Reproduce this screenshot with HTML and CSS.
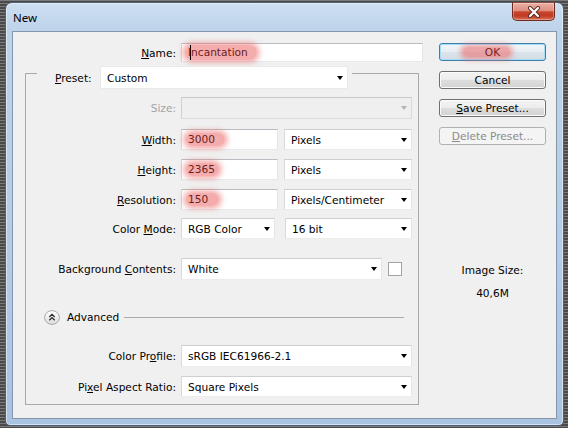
FILE: index.html
```html
<!DOCTYPE html>
<html>
<head>
<meta charset="utf-8">
<title>New</title>
<link rel="stylesheet" href="styles.css">
</head>
<body>
<div class="window">
  <div class="titlebar">
    <span class="title">New</span>
    <div class="close">
      <svg width="16" height="12" viewBox="0 0 16 12">
        <path d="M4 2 L12 10 M12 2 L4 10" stroke="#5a2a22" stroke-width="4" stroke-linecap="round" fill="none"/>
        <path d="M4 2 L12 10 M12 2 L4 10" stroke="#ffffff" stroke-width="2.2" stroke-linecap="round" fill="none"/>
      </svg>
    </div>
  </div>
  <div class="client">
    <div class="main">
      <div class="row name-row">
        <span class="lbl lbl-name"><u>N</u>ame:</span>
        <div class="field name-field"><span class="mark m-name"><span class="caret"></span>Incantation</span></div>
      </div>
      <fieldset class="group">
        <legend class="legend">
          <div class="legend-in">
            <span class="legend-lbl"><u>P</u>reset:</span>
            <div class="select preset-select"><span>Custom</span><i class="arr"></i></div>
          </div>
        </legend>
        <div class="row r-size">
          <span class="lbl dis">Size:</span>
          <div class="select disabled c-full"><span></span><i class="arr"></i></div>
        </div>
        <div class="row r-width">
          <span class="lbl"><u>W</u>idth:</span>
          <div class="field c-num"><span class="mark m-3000">3000</span></div>
          <div class="select c-unit"><span>Pixels</span><i class="arr"></i></div>
        </div>
        <div class="row r-height">
          <span class="lbl"><u>H</u>eight:</span>
          <div class="field c-num"><span class="mark m-2365">2365</span></div>
          <div class="select c-unit"><span>Pixels</span><i class="arr"></i></div>
        </div>
        <div class="row r-res">
          <span class="lbl"><u>R</u>esolution:</span>
          <div class="field c-num"><span class="mark m-150">150</span></div>
          <div class="select c-unit"><span>Pixels/Centimeter</span><i class="arr"></i></div>
        </div>
        <div class="row r-mode">
          <span class="lbl">Color <u>M</u>ode:</span>
          <div class="select c-mode"><span>RGB Color</span><i class="arr"></i></div>
          <div class="select c-bit"><span>16 bit</span><i class="arr"></i></div>
        </div>
        <div class="row r-bg">
          <span class="lbl">Background <u>C</u>ontents:</span>
          <div class="select c-bg"><span>White</span><i class="arr"></i></div>
          <div class="check"></div>
        </div>
        <div class="row r-adv">
          <div class="adv-btn">
            <svg width="16" height="15" viewBox="0 0 16 15">
              <defs>
                <linearGradient id="ag" x1="0" y1="0" x2="0" y2="1">
                  <stop offset="0" stop-color="#ffffff"/>
                  <stop offset="1" stop-color="#dcdcdc"/>
                </linearGradient>
              </defs>
              <ellipse cx="8" cy="7.5" rx="7.4" ry="6.9" fill="url(#ag)" stroke="#a9a9a9" stroke-width="1"/>
              <path d="M5.3 7 L8 4.4 L10.7 7 M5.3 10.2 L8 7.6 L10.7 10.2" stroke="#2a2a2a" stroke-width="1.3" fill="none"/>
            </svg>
          </div>
          <span class="adv-text">Advanced</span>
          <div class="adv-line"></div>
        </div>
        <div class="row r-prof">
          <span class="lbl">Color Pr<u>o</u>file:</span>
          <div class="select c-full"><span>sRGB IEC61966-2.1</span><i class="arr"></i></div>
        </div>
        <div class="row r-asp">
          <span class="lbl">Pi<u>x</u>el Aspect Ratio:</span>
          <div class="select c-full"><span>Square Pixels</span><i class="arr"></i></div>
        </div>
      </fieldset>
    </div>
    <div class="side">
      <div class="btn default"><span class="mark m-ok">OK</span></div>
      <div class="btn">Cancel</div>
      <div class="btn"><span><u>S</u>ave Preset...</span></div>
      <div class="btn disabled-btn"><span><u>D</u>elete Preset...</span></div>
      <div class="imgsize">Image Size:</div>
      <div class="imgval">40,6M</div>
    </div>
  </div>
</div>
</body>
</html>
```

FILE: styles.css
```css
* { box-sizing: border-box; }
html, body { margin: 0; padding: 0; }
body {
  width: 568px;
  height: 428px;
  overflow: hidden;
  background: repeating-linear-gradient(180deg, #7a7a7a 0 1px, #4a4a4a 1px 3px);
  font-family: "DejaVu Sans", sans-serif;
  font-size: 10.6px;
  color: #000;
}
u { text-decoration: underline; text-underline-offset: 1px; }

.window {
  margin: 2px 0 0 5px;
  width: 559px;
  height: 424px;
  border: 1px solid #4e6077;
  border-radius: 7px 7px 5px 5px;
  padding: 0 6px 6px;
  background: linear-gradient(180deg, #cddff1 0, #bdd3ea 28px, #b4cbe5 60%, #a9c3e0 100%);
  box-shadow: inset 0 0 0 1px rgba(255,255,255,0.5);
  display: flex;
  flex-direction: column;
}
.titlebar {
  height: 28px;
  flex: none;
  display: flex;
  align-items: center;
  justify-content: space-between;
}
.title {
  font-family: "Noto Sans", sans-serif;
  font-size: 11.5px;
  padding-left: 1px;
  color: #000;
}
.close {
  align-self: flex-start;
  margin-top: -1px;
  margin-right: 2px;
  width: 43px;
  height: 19px;
  border: 1px solid #6e2a1e;
  border-top-color: #8a4a40;
  border-radius: 0 0 5px 5px;
  background: linear-gradient(180deg, #eab0a4 0%, #de8f7f 45%, #c9462f 52%, #c13a22 75%, #d67259 100%);
  box-shadow: inset 0 0 0 1px rgba(255,255,255,0.3);
  display: flex;
  align-items: center;
  justify-content: center;
}

.client {
  flex: 1;
  display: flex;
  background: #f0f0f0;
  border: 1px solid #8396ad;
}
.main { width: 426px; flex: none; }
.side {
  width: 107px;
  flex: none;
  display: flex;
  flex-direction: column;
  align-items: stretch;
  padding-top: 11px;
}

.row { display: flex; align-items: center; }
.lbl { width: 139px; flex: none; text-align: right; white-space: nowrap; margin-right: 5px; }
.lbl.dis { color: #a3a3a3; }

.name-row { margin-top: 11px; height: 19px; }
.lbl-name { width: 163px; }
.name-field { width: 242px; height: 19px; }

.field {
  background: #fff;
  border: 1px solid;
  border-color: #b9bcc2 #e2e5ea #e6e9ed #d6d9de;
  display: flex;
  align-items: center;
  padding-left: 6px;
  white-space: nowrap;
}
.select {
  background: #fff;
  border: 1px solid;
  border-color: #cfcfcf #e6e6e6 #ececec #dadada;
  display: flex;
  align-items: center;
  justify-content: space-between;
  padding: 0 4px 0 6px;
  white-space: nowrap;
}
.select.disabled {
  background: #efefef;
  border-color: #c9c9c9 #dadada #dadada #cfcfcf;
}
.arr {
  display: block;
  width: 0;
  height: 0;
  border-left: 3.5px solid transparent;
  border-right: 3.5px solid transparent;
  border-top: 4px solid #000;
}
.select.disabled .arr { border-top-color: #b5b5b5; }

.mark {
  display: inline-block;
  line-height: 13px;
  border-radius: 8px;
  background: rgba(236, 104, 104, 0.55);
  box-shadow: 0 0 5px 3px rgba(236, 104, 104, 0.5);
  color: #6b1d1d;
}
.m-name { margin-left: -3px; padding: 0 9px 0 3px; }
.caret {
  display: inline-block;
  width: 1px;
  height: 15px;
  background: #000;
  vertical-align: middle;
  margin-left: 2px;
  margin-right: -3px;
}
.m-3000 { margin-left: -2px; padding: 0 10px 0 2px; }
.m-2365 { margin-left: -2px; padding: 0 4px 0 2px; }
.m-150 { margin-left: -2px; padding: 0 11px 0 2px; }
.m-ok { padding: 0 10px 0 22px; margin-right: 12px; line-height: 10px; color: #7a2020; }

.group {
  margin: -5px 0 0 12px;
  padding: 0 5px 7px 11px;
  width: 394px;
  min-inline-size: 0;
  border: 1px solid #a9a9a9;
}
.legend {
  padding: 9px 4px 0 18px;
  margin: 0;
}
.legend-in { display: flex; align-items: center; height: 23px; }
.legend-lbl { width: 45px; flex: none; white-space: nowrap; }
.preset-select { width: 248px; height: 23px; border-color: #e9e9e9; border-radius: 2px; }

.r-size { margin-top: 8px; height: 22px; }
.r-width { margin-top: 10px; height: 21px; }
.r-height { margin-top: 9px; height: 21px; }
.r-res { margin-top: 9px; height: 21px; }
.r-mode { margin-top: 8px; height: 21px; }
.r-bg { margin-top: 19px; height: 22px; }
.r-adv { margin-top: 29px; height: 16px; }
.r-prof { margin-top: 20px; height: 22px; }
.r-asp { margin-top: 9px; height: 21px; }

.c-full { width: 231px; height: 100%; }
.c-num { width: 97px; height: 100%; }
.c-unit { width: 128px; height: 100%; margin-left: 6px; }
.c-mode { width: 94px; height: 100%; }
.c-bit { width: 127px; height: 100%; margin-left: 10px; }
.c-bg { width: 201px; height: 100%; }
.check {
  width: 14px;
  height: 14px;
  margin-left: 6px;
  background: #fff;
  border: 1px solid #a3a3a3;
}

.adv-btn { margin-left: 7px; width: 16px; height: 15px; display: flex; }
.adv-text { margin-left: 7px; }
.adv-line { flex: 1; height: 1px; background: #a9a9a9; margin: 0 9px 0 5px; }

.btn {
  height: 18px;
  margin-bottom: 10px;
  border: 1px solid #707070;
  border-radius: 3px;
  background: linear-gradient(180deg, #f4f4f4 0%, #ececec 48%, #dedede 52%, #d2d2d2 100%);
  box-shadow: inset 0 0 0 1px #fbfbfb;
  display: flex;
  align-items: center;
  justify-content: center;
  white-space: nowrap;
}
.btn.default {
  border-color: #3c7fb1;
  background: linear-gradient(180deg, #f1f6f9 0%, #e7eef3 48%, #dbe4ea 52%, #d3dde4 100%);
  box-shadow: inset 0 0 0 1px #a6dcf5;
}
.btn.disabled-btn {
  border-color: #adb2b5;
  background: #f4f4f4;
  box-shadow: none;
  color: #8a8a8a;
}
.imgsize { margin-top: 109px; text-align: center; line-height: 12px; }
.imgval { margin-top: 11px; text-align: center; line-height: 12px; }
```
